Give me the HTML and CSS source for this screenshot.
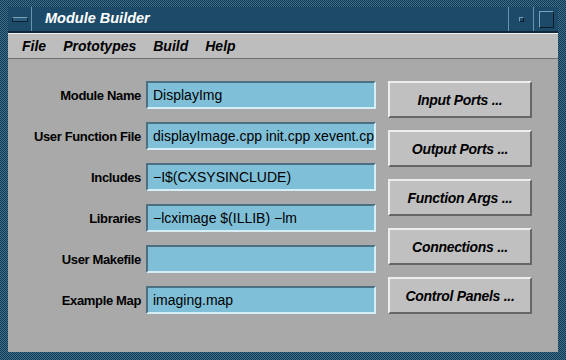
FILE: index.html
```html
<!DOCTYPE html>
<html lang="en">
<head>
    <meta charset="UTF-8">
    <title>Module Builder</title>
    <link rel="stylesheet" href="styles.css">
</head>
<body>
    <div class="window">
        <div class="titlebar">
            <div class="tb-btn tb-menu"><span class="bar"></span></div>
            <div class="title">Module Builder</div>
            <div class="tb-btn tb-min"><span class="dot"></span></div>
            <div class="tb-btn tb-max"><span class="box"></span></div>
        </div>
        <div class="menubar">
            <span class="menu-item">File</span>
            <span class="menu-item">Prototypes</span>
            <span class="menu-item">Build</span>
            <span class="menu-item">Help</span>
        </div>
        <div class="content">
            <div class="fields">
                <div class="field">
                    <label>Module Name</label>
                    <div class="entry">DisplayImg</div>
                </div>
                <div class="field">
                    <label>User Function File</label>
                    <div class="entry">displayImage.cpp init.cpp xevent.cpp</div>
                </div>
                <div class="field">
                    <label>Includes</label>
                    <div class="entry">&minus;I$(CXSYSINCLUDE)</div>
                </div>
                <div class="field">
                    <label>Libraries</label>
                    <div class="entry">&minus;lcximage $(ILLIB) &minus;lm</div>
                </div>
                <div class="field">
                    <label>User Makefile</label>
                    <div class="entry"></div>
                </div>
                <div class="field">
                    <label>Example Map</label>
                    <div class="entry">imaging.map</div>
                </div>
            </div>
            <div class="actions">
                <button>Input Ports ...</button>
                <button>Output Ports ...</button>
                <button>Function Args ...</button>
                <button>Connections ...</button>
                <button>Control Panels ...</button>
            </div>
        </div>
    </div>
</body>
</html>
```

FILE: styles.css
```css
body {
    margin: 0;
    font-family: "Liberation Sans", Arial, sans-serif;
    background-color: #1d4a68;
}

.window {
    width: 566px;
    height: 360px;
    box-sizing: border-box;
    padding: 7px 8px 8px 8px;
    display: flex;
    flex-direction: column;
    background: repeating-conic-gradient(#3a6d8c 0 25%, #163a52 0 50%) 0 0 / 2px 2px;
}

.titlebar {
    height: 24px;
    display: flex;
    align-items: stretch;
    background-color: #1d4a68;
    border-bottom: 2px solid #10283a;
}

.tb-btn {
    width: 23px;
    display: flex;
    align-items: center;
    justify-content: center;
    border-right: 1px solid #6a94ad;
}

.tb-min,
.tb-max {
    border-right: none;
    border-left: 1px solid #6a94ad;
    width: 24px;
}

.tb-menu .bar {
    width: 14px;
    height: 3px;
    background-color: #2a5b7a;
    border: 1px solid #0c2232;
    border-top-color: #7aa3bb;
}

.tb-min .dot {
    width: 3px;
    height: 3px;
    background-color: #1d4a68;
    border: 1px solid #0a1c28;
    border-top-color: #7aa3bb;
    border-left-color: #7aa3bb;
}

.tb-max .box {
    width: 13px;
    height: 15px;
    border: 1px solid #0a1c28;
    border-top-color: #7aa3bb;
    border-left-color: #7aa3bb;
}

.title {
    flex: 1;
    color: #ffffff;
    font-weight: bold;
    font-style: italic;
    font-size: 14.5px;
    padding-left: 13px;
    line-height: 23px;
}

.menubar {
    height: 24px;
    display: flex;
    align-items: center;
    background-color: #bdbdbd;
    border-top: 1px solid #f2f2f2;
    border-bottom: 1px solid #6e6e6e;
    padding-left: 14px;
}

.menu-item {
    font-style: italic;
    font-weight: bold;
    font-size: 14px;
    margin-right: 17px;
    color: #000;
}

.content {
    flex: 1;
    background-color: #a9a9a9;
    display: flex;
    padding-top: 22px;
}

.fields {
    display: flex;
    flex-direction: column;
    gap: 13px;
}

.field {
    display: flex;
    align-items: center;
}

label {
    width: 133px;
    margin-right: 5px;
    text-align: right;
    font-weight: bold;
    font-size: 13px;
    letter-spacing: -0.35px;
}

.entry {
    width: 230px;
    height: 28px;
    box-sizing: border-box;
    background-color: #7fbfd7;
    border-top: 2px solid #4c6f82;
    border-left: 2px solid #4c6f82;
    border-bottom: 2px solid #d6eef6;
    border-right: 2px solid #d6eef6;
    padding: 0 5px;
    font-size: 14px;
    line-height: 24px;
    white-space: nowrap;
    overflow: hidden;
}

.actions {
    margin-left: 12px;
    display: flex;
    flex-direction: column;
    gap: 12px;
}

button {
    width: 144px;
    height: 37px;
    background-color: #c0c0c0;
    border: 2px solid;
    border-color: #ededed #666 #666 #ededed;
    font-family: "Liberation Sans", Arial, sans-serif;
    font-style: italic;
    font-weight: bold;
    font-size: 14px;
    letter-spacing: -0.3px;
    color: #000;
    padding: 0;
}
```
